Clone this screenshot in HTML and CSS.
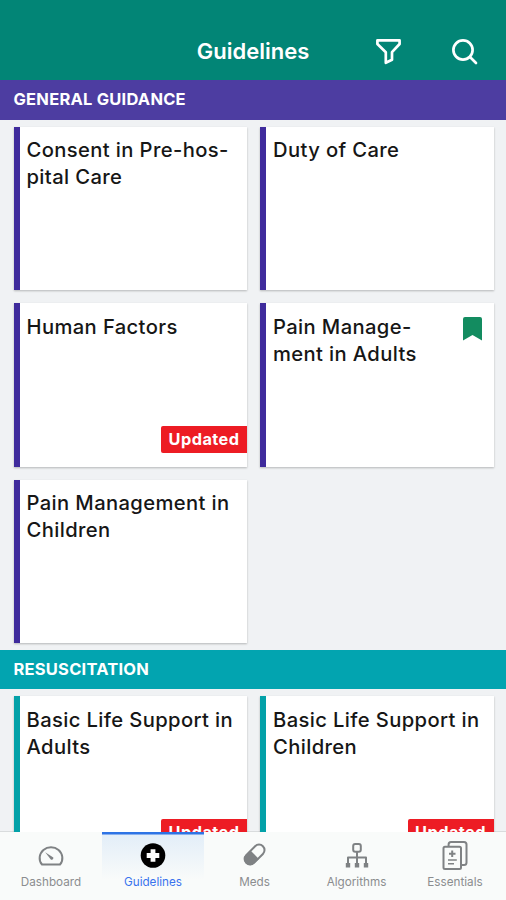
FILE: index.html
```html
<!DOCTYPE html>
<html lang="en">
<head>
<meta charset="utf-8">
<title>Guidelines</title>
<link rel="stylesheet" href="styles.css">
</head>
<body>
<div class="app">
  <header class="header">
    <span></span>
    <h1>Guidelines</h1>
    <div class="actions">
      <svg class="filter" viewBox="0 0 26 26" width="26" height="26"><path d="M1.4 1.4H23.6V5L16 13.2V20.8L9.8 23.8V13.2L1.4 5Z"/></svg>
      <svg class="search" viewBox="0 0 26 26" width="26" height="26"><circle cx="11" cy="11" r="9.6"/><path d="M18 18L24 24"/></svg>
    </div>
  </header>
  <main class="content">
    <section class="general">
      <h2>GENERAL GUIDANCE</h2>
      <div class="grid">
        <article class="card"><h3>Consent in Pre-hos-<br>pital Care</h3></article>
        <article class="card"><h3>Duty of Care</h3></article>
        <article class="card"><h3>Human Factors</h3><span class="badge">Updated</span></article>
        <article class="card"><h3>Pain Manage-<br>ment in Adults</h3><svg class="bookmark" viewBox="0 0 19 24" width="19" height="24"><path d="M2 0H17Q19 0 19 2V23.5L9.5 18L0 23.5V2Q0 0 2 0Z"/></svg></article>
        <article class="card"><h3>Pain Management in<br>Children</h3></article>
      </div>
    </section>
    <section class="resus">
      <h2>RESUSCITATION</h2>
      <div class="grid">
        <article class="card"><h3>Basic Life Support in<br>Adults</h3><span class="badge">Updated</span></article>
        <article class="card"><h3>Basic Life Support in<br>Children</h3><span class="badge">Updated</span></article>
      </div>
    </section>
  </main>
  <nav class="tabs">
    <a class="tab"><svg viewBox="0 0 32 32" width="32" height="32"><path class="line" d="M7 24.5C5 22.3 4.4 19.5 4.7 17C5.4 11.2 10.2 7.2 16 7.2S26.6 11.2 27.3 17C27.6 19.5 27 22.3 25 24.5Z"/><path class="needle" d="M10.2 12.2L18.3 17.4A2 2 0 0 1 16 19.8Z"/></svg><span>Dashboard</span></a>
    <a class="tab active"><svg viewBox="0 0 32 32" width="32" height="32"><circle cx="16" cy="15.5" r="12.3" fill="#000"/><path d="M13.6 9.2H18.4V13.1H22.3V17.9H18.4V21.8H13.6V17.9H9.7V13.1H13.6Z" fill="#fff"/></svg><span>Guidelines</span></a>
    <a class="tab"><svg viewBox="0 0 32 32" width="32" height="32"><g transform="rotate(-45 15.5 14.5)"><rect class="line" x="3.7" y="9.1" width="23.6" height="11" rx="5.5"/><path d="M15.5 8.5H9.2A6.1 6.1 0 0 0 9.2 20.7H15.5Z"/></g></svg><span>Meds</span></a>
    <a class="tab"><svg viewBox="0 0 32 32" width="32" height="32"><rect class="line" x="12.2" y="4" width="7.6" height="7.8" rx="2"/><path class="line" d="M16 12V24M7 24V17.5H25V24"/><path d="M4.8 23H9.2V27.5H4.8ZM13.8 23H18.2V27.5H13.8ZM22.8 23H27.2V27.5H22.8Z"/></svg><span>Algorithms</span></a>
    <a class="tab"><svg viewBox="0 0 32 32" width="32" height="32"><path class="line" d="M9.6 6V4.5Q9.6 2 12 2H25Q27.5 2 27.5 4.5V22.5Q27.5 25 25 25H22.5"/><rect class="line" x="4.5" y="6.8" width="17.5" height="22.2" rx="1.5"/><path class="line" d="M13.2 10.5V17M10 13.8H16.5"/><path class="line thin" d="M9 20H17.8M9 23.8H15"/></svg><span>Essentials</span></a>
  </nav>
</div>
</body>
</html>
```

FILE: styles.css
```css
* { box-sizing: border-box; }
body { margin: 0; font-family: Inter, "Liberation Sans", sans-serif; }
h1, h2, h3 { margin: 0; }
.app { height: 900px; display: flex; flex-direction: column; overflow: hidden; background: #f0f2f4; }
.header {
  flex: none; height: 79.5px; padding: 23px 28px;
  display: grid; grid-template-columns: 1fr auto 1fr;
  background: #028576; color: #fff;
}
.header h1 { font-size: 22px; line-height: 56px; height: 56px; font-weight: 600; }
.actions { display: flex; justify-content: flex-end; gap: 50px; padding-top: 16px; }
.actions svg { flex: none; fill: none; stroke: #fff; stroke-width: 2.7; stroke-linecap: round; stroke-linejoin: round; }
.content { flex: 1; min-height: 0; overflow: hidden; }
.general { --accent: #3f2b9c; --band: #4d3da1; }
.resus { --accent: #03a1a8; --band: #02a4b0; }
h2 {
  height: 40px; padding-left: 13.5px; background: var(--band); color: #fff;
  font-size: 16.5px; line-height: 39px; font-weight: 700; letter-spacing: .22px;
}
.resus h2 { height: 39.5px; }
.grid {
  display: grid; grid-template-columns: 233.5px 233.5px; grid-auto-rows: 163.5px;
  gap: 13px; padding: 7px 13.5px 6.5px;
}
.card {
  position: relative; padding: 9.6px 0 0 7px; background: #fff;
  border-left: 6.5px solid var(--accent); box-shadow: 0 1px 2px rgba(0, 0, 0, .25);
}
h3 { font-size: 20.2px; line-height: 27.3px; font-weight: 500; letter-spacing: .38px; color: #161616; white-space: nowrap; }
.badge {
  position: absolute; right: 0; bottom: 13.5px; width: 86px; height: 27px;
  border-radius: 2px 0 0 2px; background: #ed1c24; color: #fff;
  font-size: 16.3px; font-weight: 650; line-height: 27px; text-align: center; letter-spacing: .45px;
}
.bookmark { position: absolute; right: 12px; top: 14px; fill: #138c60; }
.tabs {
  flex: none; height: 68px; display: grid; grid-template-columns: 102px 102px 101px 103px 94px;
  background: #f9fbfa; box-shadow: 0 -1px 0 #d9dcdd;
}
.tab { display: flex; flex-direction: column; align-items: center; padding-top: 8px; color: #8b8d8f; }
.tab svg { fill: #7f8284; }
.tab .line { fill: none; stroke: #7f8284; stroke-width: 2; stroke-linejoin: round; }
.tab .thin { stroke-width: 1.5; }
.tab span { font-size: 11.7px; line-height: 16px; margin-top: 1.5px; }
.tab.active { color: #3973ee; background: linear-gradient(#e1edf8, #f9fbfa 70%); box-shadow: inset 0 2.5px #2d73e5; }
```
